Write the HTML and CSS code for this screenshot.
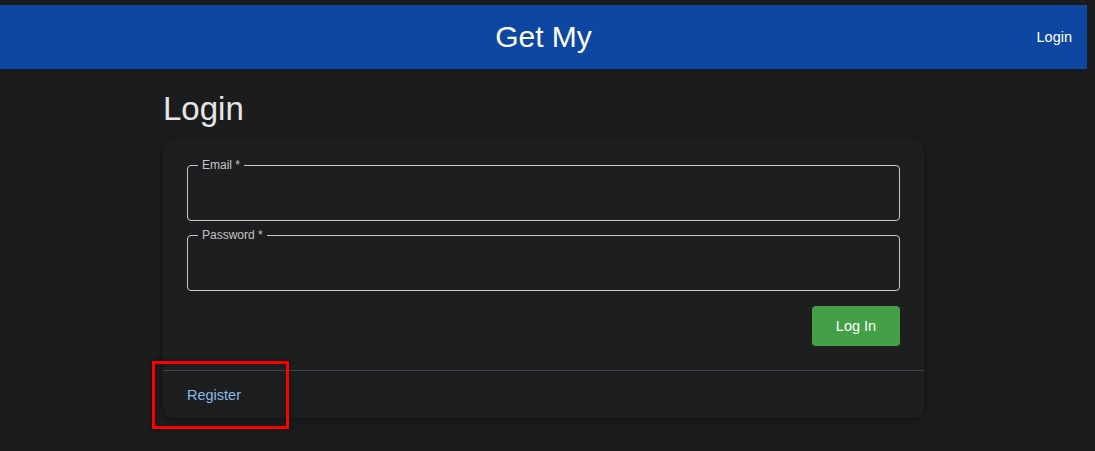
FILE: index.html
```html
<!DOCTYPE html>
<html lang="en">
<head>
<meta charset="utf-8">
<title>Get My - Login</title>
<link rel="stylesheet" href="styles.css">
</head>
<body>
<div class="page">
  <header class="appbar">
    <div class="brand">Get My</div>
    <a class="nav-link" href="#">Login</a>
  </header>
  <main class="container">
    <h1 class="title">Login</h1>
    <section class="card">
      <form class="card-body">
        <div class="field">
          <span class="field-label">Email *</span>
          <input class="field-input" type="email">
        </div>
        <div class="field">
          <span class="field-label">Password *</span>
          <input class="field-input" type="password">
        </div>
        <div class="actions">
          <button class="btn" type="button">Log In</button>
        </div>
      </form>
      <div class="card-footer">
        <a class="link" href="#">Register</a>
        <div class="highlight"></div>
      </div>
    </section>
  </main>
</div>
</body>
</html>
```

FILE: styles.css
```css
html, body {
  margin: 0;
  padding: 0;
  background: #1b1c1e;
  height: 100%;
  overflow: hidden;
}
body {
  font-family: "Liberation Sans", Arial, sans-serif;
  color: #e0e0e0;
}
.page {
  width: 1087px;
  padding-top: 5px;
}
.appbar {
  position: relative;
  height: 64px;
  background: #0d47a1;
  display: flex;
  align-items: center;
  justify-content: center;
}
.brand {
  font-size: 30px;
  color: #ffffff;
}
.nav-link {
  position: absolute;
  right: 15px;
  top: 50%;
  transform: translateY(-50%);
  color: #ffffff;
  text-decoration: none;
  font-size: 14.5px;
}
.container {
  width: 761px;
  margin: 0 auto;
}
.title {
  margin: 0;
  padding-top: 20px;
  font-size: 33px;
  font-weight: 400;
  line-height: 40px;
  height: 51px;
  color: #e6e6e6;
}
.card {
  position: relative;
  background: #1d1e20;
  border-radius: 10px;
  box-shadow: 0 2px 6px rgba(0, 0, 0, 0.35);
}
.card-body {
  padding: 25px 24px 24px;
  display: flex;
  flex-direction: column;
  gap: 14px;
  margin: 0;
}
.field {
  position: relative;
  height: 56px;
}
.field-input {
  box-sizing: border-box;
  width: 100%;
  height: 56px;
  border: 1px solid #c9c9c9;
  border-radius: 4px;
  background: transparent;
  margin: 0;
  outline: none;
}
.field-label {
  position: absolute;
  left: 11px;
  top: -8px;
  padding: 0 4px;
  background: #1d1e20;
  font-size: 12px;
  line-height: 16px;
  color: #c4c4c4;
}
.actions {
  display: flex;
  justify-content: flex-end;
  padding-top: 1px;
}
.btn {
  width: 88px;
  height: 40px;
  border: 0;
  border-radius: 4px;
  background: #43a047;
  color: #ffffff;
  font-family: inherit;
  font-size: 14.5px;
}
.card-footer {
  position: relative;
  border-top: 1px solid #434447;
  height: 47px;
  display: flex;
  align-items: center;
  padding: 0 24px;
}
.link {
  color: #8ab8e6;
  text-decoration: none;
  font-size: 14.5px;
}
.highlight {
  position: absolute;
  left: -11px;
  top: -10px;
  width: 131px;
  height: 62px;
  border: 3px solid #ff0000;
  box-shadow: 0 0 4px rgba(0, 0, 0, 0.5);
}
```
